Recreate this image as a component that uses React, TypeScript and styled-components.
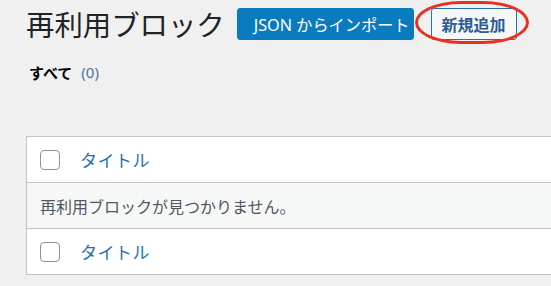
import styled, { createGlobalStyle } from "styled-components"

const GlobalStyle = createGlobalStyle`
  html, body {
    margin: 0;
    padding: 0;
    background: #f0f0f1;
    overflow: hidden;
  }
  body {
    font-family: "Noto Sans", "Noto Sans CJK JP", sans-serif;
    color: #1d2327;
  }
`

const Wrap = styled.div`
  padding: 0 0 0 26px;
  width: 560px;
`

const HeaderRow = styled.div`
  display: flex;
  align-items: center;
  height: 48px;
`

const Title = styled.h1`
  margin: 0 12px 0 0;
  font-family: "Noto Sans CJK JP", sans-serif;
  font-size: 28.4px;
  font-weight: 400;
  line-height: 1;
  color: #1d2327;
`

const Button = styled.button<{ $primary?: boolean }>`
  height: 32px;
  box-sizing: border-box;
  display: inline-flex;
  align-items: center;
  border-radius: 3px;
  font-family: "Noto Sans", "Noto Sans CJK JP", sans-serif;
  cursor: pointer;
  white-space: nowrap;
  background: ${(p) => (p.$primary ? "#0a7bbf" : "#f6f7f7")};
  color: ${(p) => (p.$primary ? "#ffffff" : "#2b5d93")};
  border: 1px solid ${(p) => (p.$primary ? "#0a7bbf" : "#2271b1")};
  font-weight: ${(p) => (p.$primary ? 400 : 700)};
  font-size: ${(p) => (p.$primary ? "16.2px" : "16px")};
  padding: ${(p) => (p.$primary ? "0 3px 0 16px" : "0 10px")};
`

const Marked = styled.span`
  position: relative;
  display: inline-flex;
  margin-left: 17px;
`

const Ring = styled.span`
  position: absolute;
  left: -16px;
  right: -12px;
  top: -7px;
  bottom: -4px;
  border: 3px solid #e8301f;
  border-radius: 40% / 50%;
  pointer-events: none;
`

const Filters = styled.div`
  display: flex;
  align-items: center;
  gap: 9px;
  height: 48px;
  padding-left: 3px;
`

const FilterCurrent = styled.span`
  font-family: "Noto Sans CJK JP", sans-serif;
  font-size: 15px;
  font-weight: 700;
  color: #000000;
`

const Count = styled.span`
  color: #50729a;
  font-size: 15px;
`

const Table = styled.div`
  margin-top: 40px;
  border: 1px solid #c3c4c7;
  border-right: 0;
  background: #ffffff;
`

const Row = styled.div<{ $muted?: boolean }>`
  display: flex;
  align-items: center;
  height: 45px;
  padding-left: 13px;
  background: ${(p) => (p.$muted ? "#f6f7f7" : "#ffffff")};
  border-top: 1px solid #c3c4c7;
  &:first-child {
    border-top: 0;
  }
`

const Checkbox = styled.span`
  box-sizing: border-box;
  width: 20px;
  height: 20px;
  border: 1px solid #8c8f94;
  border-radius: 4px;
  background: #ffffff;
  margin-right: 20px;
`

const ColumnLink = styled.a`
  font-family: "Noto Sans CJK JP", sans-serif;
  font-size: 17px;
  color: #2271b1;
  text-decoration: none;
  letter-spacing: 0.5px;
`

const Empty = styled.span`
  font-family: "Noto Sans CJK JP", sans-serif;
  font-size: 16px;
  color: #50575e;
`

export default function App() {
  return (
    <>
      <GlobalStyle />
      <Wrap>
        <HeaderRow>
          <Title>再利用ブロック</Title>
          <Button $primary>JSON からインポート</Button>
          <Marked>
            <Button>新規追加</Button>
            <Ring />
          </Marked>
        </HeaderRow>
        <Filters>
          <FilterCurrent>すべて</FilterCurrent>
          <Count>(0)</Count>
        </Filters>
        <Table>
          <Row>
            <Checkbox />
            <ColumnLink href="#">タイトル</ColumnLink>
          </Row>
          <Row $muted>
            <Empty>再利用ブロックが見つかりません。</Empty>
          </Row>
          <Row>
            <Checkbox />
            <ColumnLink href="#">タイトル</ColumnLink>
          </Row>
        </Table>
      </Wrap>
    </>
  )
}
